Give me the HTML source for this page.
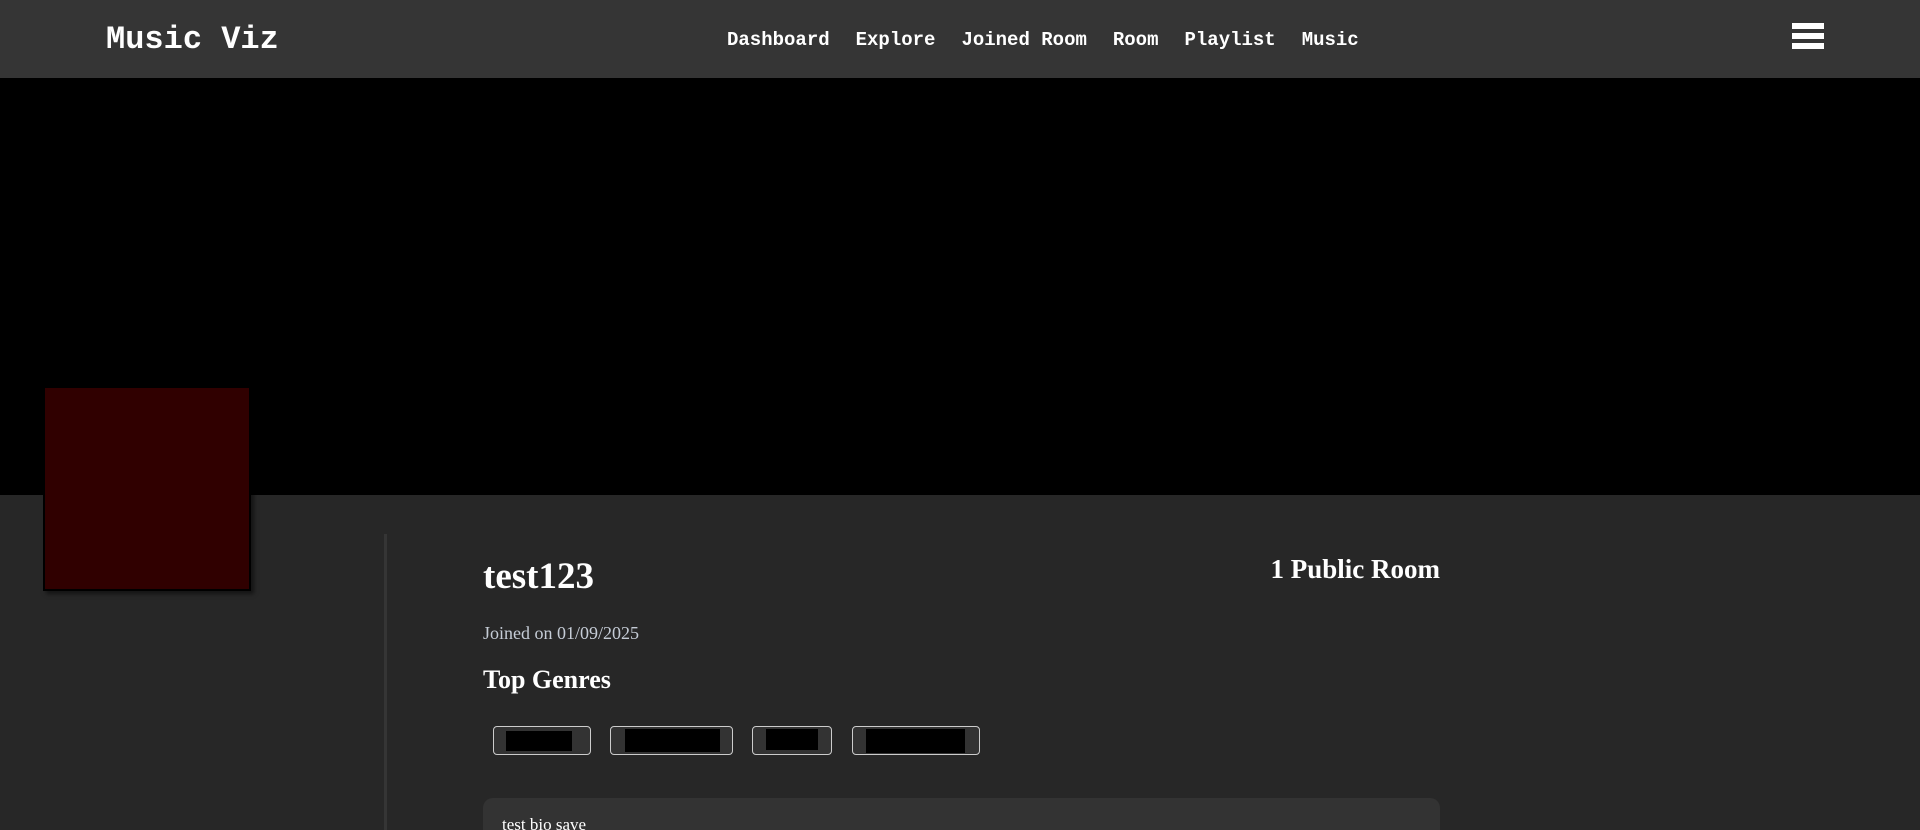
<!DOCTYPE html>
<html><head><meta charset="utf-8">
<style>
html,body{margin:0;padding:0;width:1920px;height:830px;overflow:hidden;background:#272727;}
body{position:relative;}
.hdr{position:absolute;left:0;top:0;width:1920px;height:78px;background:#353535;}
.logo{position:absolute;left:106px;top:21px;font:bold 32px "Liberation Mono",monospace;color:#fff;}
.nav{position:absolute;left:727px;top:29px;font:bold 19px "Liberation Mono",monospace;color:#fff;white-space:nowrap;}
.nav span{margin-right:26px;}
.bar{position:absolute;left:1792px;width:32px;height:6px;background:#fff;}
.banner{position:absolute;left:0;top:78px;width:1920px;height:417px;background:#000;}
.av{position:absolute;left:43px;top:386px;width:204px;height:201px;background:#300000;border:2px solid #000;box-shadow:3px 3px 4px rgba(0,0,0,.5);}
.vl{position:absolute;left:384px;top:534px;width:3px;height:296px;background:#353535;}
.serif{font-family:"Liberation Serif","DejaVu Serif",serif;color:#fff;position:absolute;white-space:nowrap;}
.chip{position:absolute;top:726px;height:27px;border:1px solid #ccc;border-radius:4px;background:#333;}
.chip i{position:absolute;background:#000;}
.bio{position:absolute;left:483px;top:798px;width:957px;height:32px;background:#333;border-radius:10px 10px 0 0;}
</style></head><body>
<div class="hdr">
<div class="logo">Music Viz</div>
<div class="nav"><span>Dashboard</span><span>Explore</span><span>Joined Room</span><span>Room</span><span>Playlist</span><span>Music</span></div>
<div class="bar" style="top:23px"></div><div class="bar" style="top:33px"></div><div class="bar" style="top:43px"></div>
</div>
<div class="banner"></div>
<div class="av"></div>
<div class="vl"></div>
<div class="serif" style="left:483px;top:555px;font-size:37px;font-weight:bold;">test123</div>
<div class="serif" style="right:480px;top:554px;font-size:27px;font-weight:bold;">1 Public Room</div>
<div class="serif" style="left:483px;top:623px;font-size:18px;color:#c5ccd6;">Joined on 01/09/2025</div>
<div class="serif" style="left:483px;top:665px;font-size:26px;font-weight:bold;">Top Genres</div>
<div class="chip" style="left:493px;width:96px"><i style="left:12px;top:4px;width:66px;height:20px"></i></div>
<div class="chip" style="left:610px;width:121px"><i style="left:14px;top:2px;width:95px;height:23px"></i></div>
<div class="chip" style="left:752px;width:78px"><i style="left:13px;top:2px;width:52px;height:21px"></i></div>
<div class="chip" style="left:852px;width:126px"><i style="left:13px;top:2px;width:99px;height:24px"></i></div>
<div class="bio"></div>
<div class="serif" style="left:502px;top:815px;font-size:17px;">test bio save</div>
</body></html>
